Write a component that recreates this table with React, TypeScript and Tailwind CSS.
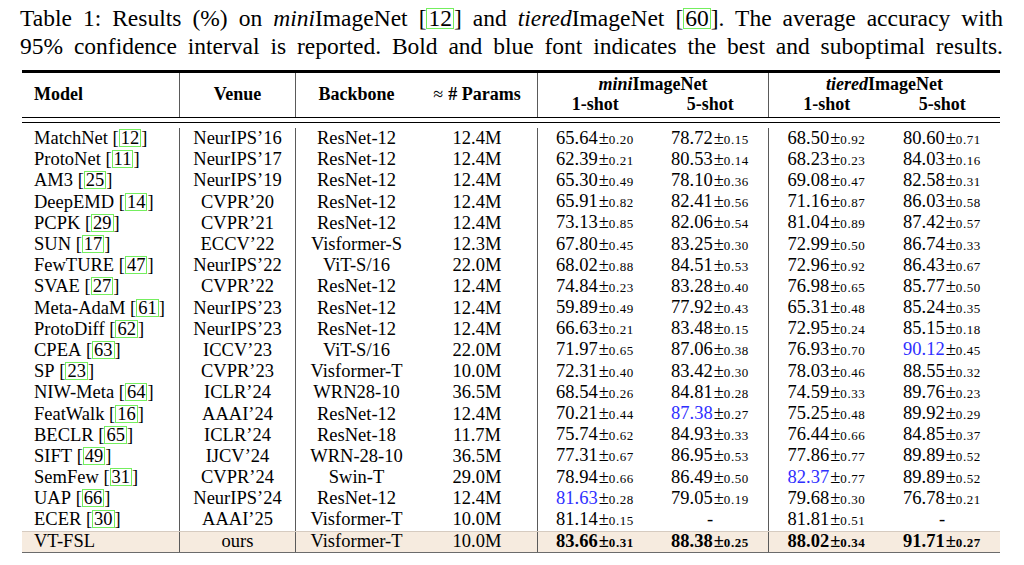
type Cell = { v: string; pm: string; blue?: boolean };

type Row = {
  model: string;
  cite: string;
  venue: string;
  backbone: string;
  params: string;
  res: (Cell | null)[];
};

const c = (v: string, pm: string, blue = false): Cell => ({ v, pm, blue });

const rows: Row[] = [
  { model: "MatchNet", cite: "12", venue: "NeurIPS’16", backbone: "ResNet-12", params: "12.4M", res: [c("65.64", "0.20"), c("78.72", "0.15"), c("68.50", "0.92"), c("80.60", "0.71")] },
  { model: "ProtoNet", cite: "11", venue: "NeurIPS’17", backbone: "ResNet-12", params: "12.4M", res: [c("62.39", "0.21"), c("80.53", "0.14"), c("68.23", "0.23"), c("84.03", "0.16")] },
  { model: "AM3", cite: "25", venue: "NeurIPS’19", backbone: "ResNet-12", params: "12.4M", res: [c("65.30", "0.49"), c("78.10", "0.36"), c("69.08", "0.47"), c("82.58", "0.31")] },
  { model: "DeepEMD", cite: "14", venue: "CVPR’20", backbone: "ResNet-12", params: "12.4M", res: [c("65.91", "0.82"), c("82.41", "0.56"), c("71.16", "0.87"), c("86.03", "0.58")] },
  { model: "PCPK", cite: "29", venue: "CVPR’21", backbone: "ResNet-12", params: "12.4M", res: [c("73.13", "0.85"), c("82.06", "0.54"), c("81.04", "0.89"), c("87.42", "0.57")] },
  { model: "SUN", cite: "17", venue: "ECCV’22", backbone: "Visformer-S", params: "12.3M", res: [c("67.80", "0.45"), c("83.25", "0.30"), c("72.99", "0.50"), c("86.74", "0.33")] },
  { model: "FewTURE", cite: "47", venue: "NeurIPS’22", backbone: "ViT-S/16", params: "22.0M", res: [c("68.02", "0.88"), c("84.51", "0.53"), c("72.96", "0.92"), c("86.43", "0.67")] },
  { model: "SVAE", cite: "27", venue: "CVPR’22", backbone: "ResNet-12", params: "12.4M", res: [c("74.84", "0.23"), c("83.28", "0.40"), c("76.98", "0.65"), c("85.77", "0.50")] },
  { model: "Meta-AdaM", cite: "61", venue: "NeurIPS’23", backbone: "ResNet-12", params: "12.4M", res: [c("59.89", "0.49"), c("77.92", "0.43"), c("65.31", "0.48"), c("85.24", "0.35")] },
  { model: "ProtoDiff", cite: "62", venue: "NeurIPS’23", backbone: "ResNet-12", params: "12.4M", res: [c("66.63", "0.21"), c("83.48", "0.15"), c("72.95", "0.24"), c("85.15", "0.18")] },
  { model: "CPEA", cite: "63", venue: "ICCV’23", backbone: "ViT-S/16", params: "22.0M", res: [c("71.97", "0.65"), c("87.06", "0.38"), c("76.93", "0.70"), c("90.12", "0.45", true)] },
  { model: "SP", cite: "23", venue: "CVPR’23", backbone: "Visformer-T", params: "10.0M", res: [c("72.31", "0.40"), c("83.42", "0.30"), c("78.03", "0.46"), c("88.55", "0.32")] },
  { model: "NIW-Meta", cite: "64", venue: "ICLR’24", backbone: "WRN28-10", params: "36.5M", res: [c("68.54", "0.26"), c("84.81", "0.28"), c("74.59", "0.33"), c("89.76", "0.23")] },
  { model: "FeatWalk", cite: "16", venue: "AAAI’24", backbone: "ResNet-12", params: "12.4M", res: [c("70.21", "0.44"), c("87.38", "0.27", true), c("75.25", "0.48"), c("89.92", "0.29")] },
  { model: "BECLR", cite: "65", venue: "ICLR’24", backbone: "ResNet-18", params: "11.7M", res: [c("75.74", "0.62"), c("84.93", "0.33"), c("76.44", "0.66"), c("84.85", "0.37")] },
  { model: "SIFT", cite: "49", venue: "IJCV’24", backbone: "WRN-28-10", params: "36.5M", res: [c("77.31", "0.67"), c("86.95", "0.53"), c("77.86", "0.77"), c("89.89", "0.52")] },
  { model: "SemFew", cite: "31", venue: "CVPR’24", backbone: "Swin-T", params: "29.0M", res: [c("78.94", "0.66"), c("86.49", "0.50"), c("82.37", "0.77", true), c("89.89", "0.52")] },
  { model: "UAP", cite: "66", venue: "NeurIPS’24", backbone: "ResNet-12", params: "12.4M", res: [c("81.63", "0.28", true), c("79.05", "0.19"), c("79.68", "0.30"), c("76.78", "0.21")] },
  { model: "ECER", cite: "30", venue: "AAAI’25", backbone: "Visformer-T", params: "10.0M", res: [c("81.14", "0.15"), null, c("81.81", "0.51"), null] },
];

const ours: Cell[] = [c("83.66", "0.31"), c("88.38", "0.25"), c("88.02", "0.34"), c("91.71", "0.27")];

// same border class on every rule so the colour stays consistent
const vrule = "border-l border-[#5a5a5a]";

const Cite = ({ n }: { n: string }) => (
  <span>
    [<span className="inline-block border border-[#74ee5e] px-[1px] leading-[16px]">{n}</span>]
  </span>
);

const Result = ({ cell, bold }: { cell: Cell | null; bold?: boolean }) => {
  if (!cell) return <span>-</span>;
  return (
    <span className={`whitespace-nowrap ${bold ? "font-bold" : ""}`}>
      <span className={cell.blue ? "text-[#2f2fff]" : ""}>{cell.v}</span>
      <span className="ml-[1px]">±</span>
      <span className="text-[13px] tracking-[0.6px]">{cell.pm}</span>
    </span>
  );
};

const ResultCells = ({ res, bold }: { res: (Cell | null)[]; bold?: boolean }) => (
  <>
    <div className={`w-[115px] flex items-center justify-center ${vrule}`}>
      <Result cell={res[0]} bold={bold} />
    </div>
    <div className="w-[116px] flex items-center justify-center">
      <Result cell={res[1]} bold={bold} />
    </div>
    <div className={`w-[116px] flex items-center justify-center ${vrule}`}>
      <Result cell={res[2]} bold={bold} />
    </div>
    <div className="w-[116px] flex items-center justify-center">
      <Result cell={res[3]} bold={bold} />
    </div>
  </>
);

export default function App() {
  return (
    <div className="w-[1024px] h-[565px] bg-white text-black overflow-hidden font-['Liberation_Serif','Times_New_Roman',serif]">
      {/* Caption */}
      <div className="ml-[20px] w-[983px] pt-[4px] text-[23.5px] leading-[28px]">
        <div className="whitespace-nowrap text-justify [text-align-last:justify]">
          Table 1: Results (%) on <i>mini</i>ImageNet [<span className="inline-block border border-[#74ee5e] px-[1px] leading-[19px]">12</span>] and <i>tiered</i>ImageNet [<span className="inline-block border border-[#74ee5e] px-[1px] leading-[19px]">60</span>]. The average accuracy with
        </div>
        <div className="whitespace-nowrap text-justify [text-align-last:justify]">
          95% confidence interval is reported. Bold and blue font indicates the best and suboptimal results.
        </div>
      </div>

      {/* Table */}
      <div className="ml-[22px] w-[978px] mt-[10px] text-[18.5px]">
        <div className="h-[3px] bg-black" />

        {/* Header */}
        <div className="flex h-[44px] font-bold text-[18px]">
          <div className="w-[157px] flex items-center pl-[12px] pb-[2px]">Model</div>
          <div className={`w-[116px] flex items-center justify-center pb-[2px] ${vrule}`}>Venue</div>
          <div className={`w-[122px] flex items-center justify-center pb-[2px] ${vrule}`}>Backbone</div>
          <div className="w-[120px] flex items-center justify-center pb-[2px]">
            <span className="font-normal mr-[5px]">≈</span># Params
          </div>
          <div className={`w-[231px] flex flex-col ${vrule}`}>
            <div className="h-[22px] leading-[22px] text-center">
              <i>mini</i>ImageNet
            </div>
            <div className="flex leading-[18px]">
              <div className="w-[115px] text-center">1-shot</div>
              <div className="w-[116px] text-center">5-shot</div>
            </div>
          </div>
          <div className={`w-[232px] flex flex-col ${vrule}`}>
            <div className="h-[22px] leading-[22px] text-center">
              <i>tiered</i>ImageNet
            </div>
            <div className="flex leading-[18px]">
              <div className="w-[116px] text-center">1-shot</div>
              <div className="w-[116px] text-center">5-shot</div>
            </div>
          </div>
        </div>

        {/* Double rule */}
        <div className="h-[6px] border-t-[1.5px] border-b-[1.5px] border-black" />
        <div className="h-[5px]" />

        {/* Body */}
        {rows.map((r) => (
          <div key={r.model} className="flex h-[21.2px] leading-[21px]">
            <div className="w-[157px] flex items-center pl-[12px] whitespace-nowrap">
              {r.model}&nbsp;<Cite n={r.cite} />
            </div>
            <div className={`w-[116px] flex items-center justify-center ${vrule}`}>{r.venue}</div>
            <div className={`w-[122px] flex items-center justify-center ${vrule}`}>{r.backbone}</div>
            <div className="w-[120px] flex items-center justify-center">{r.params}</div>
            <ResultCells res={r.res} />
          </div>
        ))}

        {/* Ours */}
        <div className="flex h-[21px] leading-[21px] bg-[#f6ebdf] border-t border-[#d6cbc0]">
          <div className="w-[157px] flex items-center pl-[12px]">VT-FSL</div>
          <div className={`w-[116px] flex items-center justify-center ${vrule}`}>ours</div>
          <div className={`w-[122px] flex items-center justify-center ${vrule}`}>Visformer-T</div>
          <div className="w-[120px] flex items-center justify-center">10.0M</div>
          <ResultCells res={ours} bold />
        </div>
        <div className="h-[1.5px] bg-[#6b6b6b]" />
      </div>
    </div>
  );
}
